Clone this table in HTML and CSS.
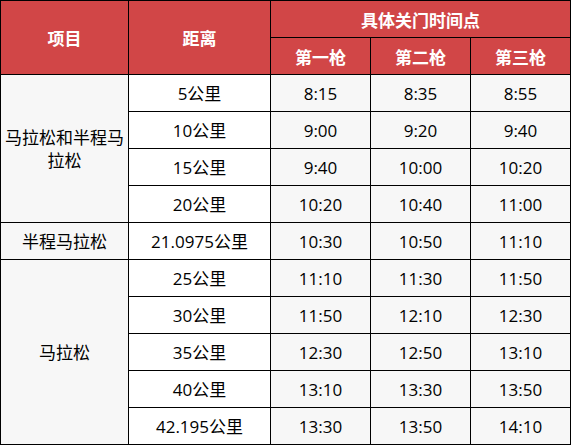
FILE: index.html
```html
<!DOCTYPE html>
<html lang="zh">
<head>
<meta charset="utf-8">
<link rel="stylesheet" href="styles.css">
</head>
<body>
<table class="sched">
  <colgroup>
    <col class="c-item"><col class="c-dist"><col class="c-t"><col class="c-t"><col class="c-t">
  </colgroup>
  <thead>
    <tr><th rowspan="2">项目</th><th rowspan="2">距离</th><th colspan="3">具体关门时间点</th></tr>
    <tr><th>第一枪</th><th>第二枪</th><th>第三枪</th></tr>
  </thead>
  <tbody>
    <tr><td class="item" rowspan="4">马拉松和半程马拉松</td><td class="dist">5公里</td><td>8:15</td><td>8:35</td><td>8:55</td></tr>
    <tr><td class="dist">10公里</td><td>9:00</td><td>9:20</td><td>9:40</td></tr>
    <tr><td class="dist">15公里</td><td>9:40</td><td>10:00</td><td>10:20</td></tr>
    <tr><td class="dist">20公里</td><td>10:20</td><td>10:40</td><td>11:00</td></tr>
    <tr><td class="item">半程马拉松</td><td class="dist">21.0975公里</td><td>10:30</td><td>10:50</td><td>11:10</td></tr>
    <tr><td class="item" rowspan="5">马拉松</td><td class="dist">25公里</td><td>11:10</td><td>11:30</td><td>11:50</td></tr>
    <tr><td class="dist">30公里</td><td>11:50</td><td>12:10</td><td>12:30</td></tr>
    <tr><td class="dist">35公里</td><td>12:30</td><td>12:50</td><td>13:10</td></tr>
    <tr><td class="dist">40公里</td><td>13:10</td><td>13:30</td><td>13:50</td></tr>
    <tr><td class="dist">42.195公里</td><td>13:30</td><td>13:50</td><td>14:10</td></tr>
  </tbody>
</table>
</body>
</html>
```
FILE: styles.css
```css
html, body { margin: 0; padding: 0; background: #fff; }
.sched {
  border-collapse: collapse;
  table-layout: fixed;
  width: 570px;
  font-family: "Open Sans", "Noto Sans CJK SC", sans-serif;
  font-size: 17px;
  color: #000;
}
.c-item { width: 128px; }
.c-dist { width: 142px; }
.c-t { width: 100px; }
.sched th, .sched td {
  border: 1px solid #000;
  text-align: center;
  vertical-align: middle;
  padding: 0 2px;
  height: 36px;
  line-height: 23px;
}
.sched th {
  background: #d14647;
  color: #fff;
  font-weight: bold;
  font-family: "Noto Sans CJK SC", sans-serif;
}
.sched td { background: #f7f7f7; }
.sched td.dist { background: #fff; }
```
